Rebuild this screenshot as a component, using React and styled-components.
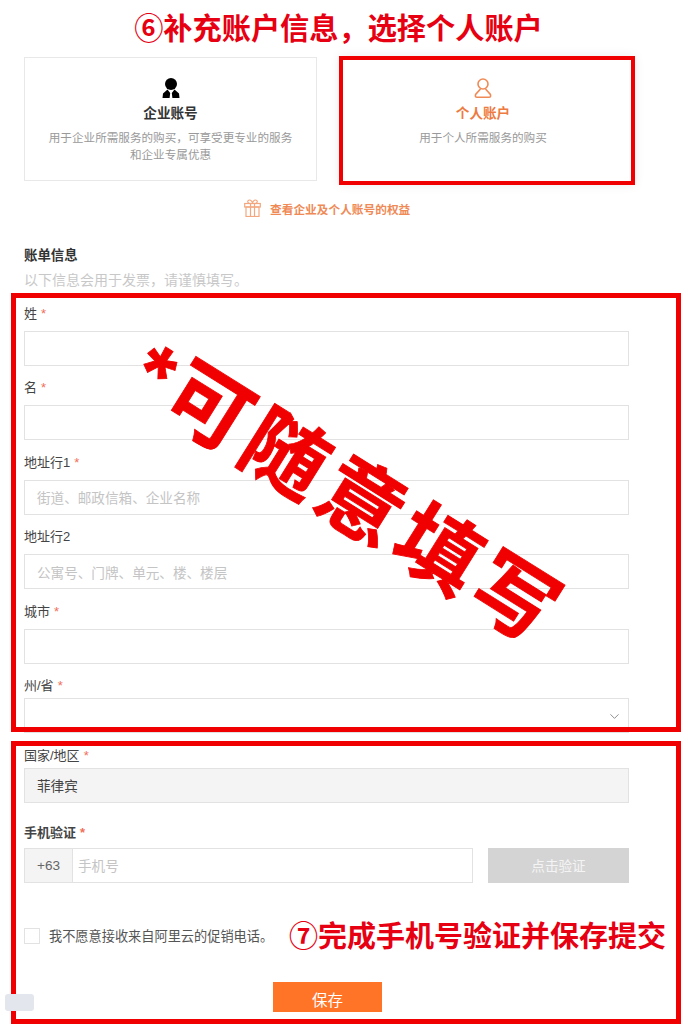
import styled, { createGlobalStyle } from "styled-components";
import { ChevronDown } from "lucide-react";

const GlobalStyle = createGlobalStyle`
  html, body {
    margin: 0;
    background: #fff;
  }
  * {
    box-sizing: border-box;
  }
`

const Page = styled.div`
  position: relative;
  width: 693px;
  height: 1024px;
  overflow: hidden;
  padding: 0 64px 0 24px;
  font-family: "Liberation Sans", "Noto Sans CJK SC", sans-serif;
  color: #333;
`

const Heading = styled.h1`
  margin: 0 -48px 0 -24px;
  height: 57px;
  padding-top: 11px;
  font-size: 29.2px;
  line-height: 36px;
  font-weight: 700;
  color: #e60012;
  text-align: center;
  white-space: nowrap;
`

const Cards = styled.div`
  display: flex;
  align-items: flex-start;
  gap: 22px;
`

const Card = styled.div`
  flex-shrink: 0;
  width: ${props => props.$active ? 296 : 293}px;
  height: ${props => props.$active ? 129 : 124}px;
  margin-top: ${props => props.$active ? -1 : 0}px;
  padding: ${props => props.$active ? "18px 8px 0 0" : "20px 0 0"};
  border: ${props => props.$active ? "4px solid #f00000" : "1px solid #e8e8e8"};
  box-shadow: ${props => props.$active ? "0 0 10px rgba(0, 0, 0, 0.08)" : "none"};
  display: flex;
  flex-direction: column;
  align-items: center;
  text-align: center;
`

const CardTitle = styled.div`
  margin-top: 5px;
  font-size: 13.6px;
  line-height: 18px;
  font-weight: 700;
  color: ${props => props.$active ? "#ed7b41" : "#333"};
`

const CardText = styled.div`
  margin-top: 6px;
  font-size: 11.6px;
  line-height: 17px;
  color: #999;
`

const Benefits = styled.div`
  height: 50px;
  margin-top: -2px;
  padding-left: 220px;
  display: flex;
  align-items: center;
  gap: 9px;
  font-size: 11.7px;
  font-weight: 700;
  color: #ef8a56;
`

const SectionTitle = styled.div`
  margin-top: 13px;
  font-size: 13.4px;
  line-height: 20px;
  font-weight: 700;
  color: #333;
`

const SectionHint = styled.div`
  margin-top: 4px;
  font-size: 14px;
  line-height: 20px;
  color: #c8c8c8;
`

const Fields = styled.div`
  margin-top: 17px;
`

const Field = styled.div`
  height: ${props => props.$height || 74.4}px;
`

const Label = styled.div`
  height: ${props => props.$height || 24}px;
  font-size: 13px;
  line-height: 13px;
  font-weight: ${props => props.$bold ? 700 : 400};
  color: #444;
`

const Star = styled.span`
  margin-left: 4px;
  color: #f0705a;
`

const Box = styled.div`
  position: relative;
  width: 605px;
  height: 35px;
  padding-left: 12px;
  display: flex;
  align-items: center;
  border: 1px solid #e2e2e2;
  background: ${props => props.$filled ? "#f4f4f4" : "#fff"};
  font-size: 13.6px;
  color: ${props => props.$filled ? "#444" : "#c4c4c4"};
`

const SelectArrow = styled(ChevronDown)`
  position: absolute;
  right: 6px;
  top: 10px;
  width: 15px;
  height: 15px;
  color: #888;
`

const PhoneRow = styled.div`
  width: 605px;
  display: flex;
  justify-content: space-between;
`

const PhoneBox = styled.div`
  width: 449px;
  height: 35px;
  display: flex;
  align-items: center;
  border: 1px solid #e2e2e2;
  font-size: 13.6px;
  color: #c4c4c4;
`

const Prefix = styled.div`
  width: 48px;
  height: 100%;
  margin-right: 5px;
  display: flex;
  align-items: center;
  justify-content: center;
  background: #f4f4f4;
  border-right: 1px solid #e2e2e2;
  color: #666;
`

const VerifyButton = styled.div`
  width: 141px;
  height: 35px;
  display: flex;
  align-items: center;
  justify-content: center;
  background: #d4d4d4;
  font-size: 13.6px;
  color: #f4f4f4;
`

const CheckRow = styled.div`
  margin-top: 45px;
  display: flex;
  align-items: center;
  gap: 9px;
  font-size: 13.2px;
  line-height: 17px;
  color: #555;
`

const CheckBox = styled.span`
  width: 16px;
  height: 16px;
  border: 1px solid #e2e2e2;
`

const SaveButton = styled.div`
  width: 109px;
  height: 30px;
  margin: 37px 0 0 249px;
  padding-top: 9px;
  background: #ff7427;
  text-align: center;
  font-size: 15.5px;
  line-height: 20px;
  color: #fff;
`

const Frame = styled.div`
  position: absolute;
  left: 11px;
  top: ${props => props.$top}px;
  width: 670px;
  height: ${props => props.$height}px;
  border: 5px solid #f00000;
  pointer-events: none;
`

const StepNote = styled.div`
  position: absolute;
  left: 289px;
  top: 919px;
  font-size: 29px;
  line-height: 36px;
  font-weight: 700;
  color: #e60012;
  white-space: nowrap;
`

const Stamp = styled.div`
  position: absolute;
  left: 140px;
  top: 320px;
  font-size: 84px;
  line-height: 90px;
  letter-spacing: 6px;
  font-weight: 700;
  -webkit-text-stroke: 0.8px #f00000;
  color: #f00000;
  white-space: nowrap;
  transform: rotate(32deg);
  transform-origin: left center;
`

const Blob = styled.div`
  position: absolute;
  left: 5px;
  top: 994px;
  width: 29px;
  height: 17px;
  border-radius: 3px;
  background: #e3e6ec;
`

const CompanyIcon = () => (
    <svg width="18" height="22" viewBox="0 0 18 22">
        <circle cx="9" cy="6" r="6" fill="#000"/>
        <path d="M5.5 11.5 L1 15.5 L0.5 20 H7.6 L8.2 15 L5.5 11.5 Z M12.5 11.5 L17 15.5 L17.5 20 H10.4 L9.8 15 L12.5 11.5 Z" fill="#000"/>
    </svg>
)

const PersonIcon = () => (
    <svg width="18" height="22" viewBox="0 0 18 22" fill="none" stroke="#ef8a56" strokeWidth="1.6">
        <circle cx="9" cy="6" r="5"/>
        <path d="M6.5 11 L1.6 16.5 Q0.8 19.2 3 19.2 H15 Q17.2 19.2 16.4 16.5 L11.5 11"/>
    </svg>
)

const GiftIcon = () => (
    <svg width="17" height="18" viewBox="0 0 17 18" fill="none" stroke="#f3a77f" strokeWidth="1.2">
        <rect x="0.7" y="4.5" width="15.6" height="3.5"/>
        <rect x="2" y="8" width="13" height="9.5"/>
        <path d="M6.5 4.5 V17.5 M10.5 4.5 V17.5"/>
        <path d="M6.5 4.5 C3 4.5 3 1 5.5 1 C7 1 8.5 3 8.5 4.5 C8.5 3 10 1 11.5 1 C14 1 14 4.5 10.5 4.5"/>
    </svg>
)

const billingFields = [
    { name: "姓", required: true },
    { name: "名", required: true },
    { name: "地址行1", required: true, hint: "街道、邮政信箱、企业名称" },
    { name: "地址行2", hint: "公寓号、门牌、单元、楼、楼层" },
    { name: "城市", required: true },
]

const App = () => {
    return (
        <Page>
            <GlobalStyle/>
            <Heading>⑥补充账户信息，选择个人账户</Heading>
            <Cards>
                <Card>
                    <CompanyIcon/>
                    <CardTitle>企业账号</CardTitle>
                    <CardText>用于企业所需服务的购买，可享受更专业的服务<br/>和企业专属优惠</CardText>
                </Card>
                <Card $active>
                    <PersonIcon/>
                    <CardTitle $active>个人账户</CardTitle>
                    <CardText>用于个人所需服务的购买</CardText>
                </Card>
            </Cards>
            <Benefits>
                <GiftIcon/>
                查看企业及个人账号的权益
            </Benefits>
            <SectionTitle>账单信息</SectionTitle>
            <SectionHint>以下信息会用于发票，请谨慎填写。</SectionHint>
            <Fields>
                {billingFields.map(field =>
                    <Field key={field.name}>
                        <Label>{field.name}{field.required && <Star>*</Star>}</Label>
                        <Box>{field.hint}</Box>
                    </Field>
                )}
                <Field $height={70}>
                    <Label $height={19}>州/省<Star>*</Star></Label>
                    <Box>
                        <SelectArrow strokeWidth={1.5}/>
                    </Box>
                </Field>
                <Field $height={77}>
                    <Label $height={19}>国家/地区<Star>*</Star></Label>
                    <Box $filled>菲律宾</Box>
                </Field>
                <Label $bold $height={22}>手机验证<Star>*</Star></Label>
                <PhoneRow>
                    <PhoneBox>
                        <Prefix>+63</Prefix>
                        手机号
                    </PhoneBox>
                    <VerifyButton>点击验证</VerifyButton>
                </PhoneRow>
            </Fields>
            <CheckRow>
                <CheckBox/>
                我不愿意接收来自阿里云的促销电话。
            </CheckRow>
            <SaveButton>保存</SaveButton>

            <Frame $top={293} $height={439}/>
            <Frame $top={741} $height={283}/>
            <StepNote>⑦完成手机号验证并保存提交</StepNote>
            <Stamp>*可随意填写</Stamp>
            <Blob/>
        </Page>
    )
}

export default App
